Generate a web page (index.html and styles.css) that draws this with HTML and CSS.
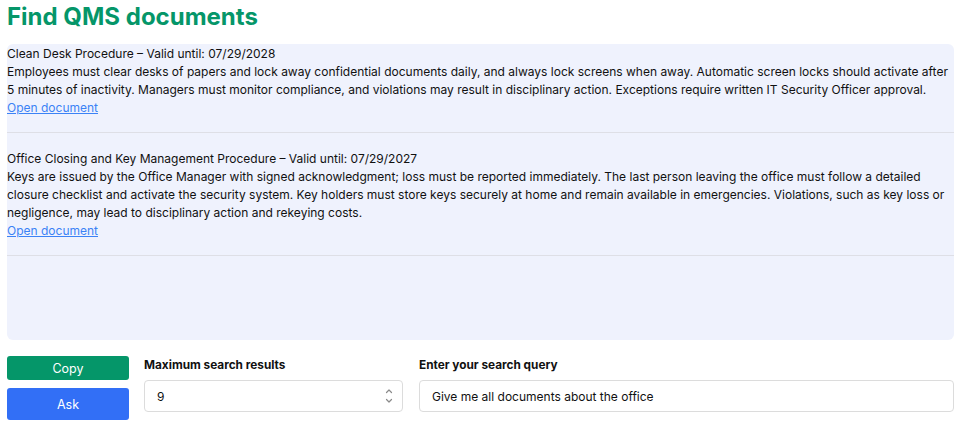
FILE: index.html
```html
<!DOCTYPE html>
<html>
<head>
<meta charset="utf-8">
<link rel="stylesheet" href="styles.css">
</head>
<body>
<div class="page">
  <h1 class="title">Find QMS documents</h1>
  <div class="results">
    <div class="item">
      <div class="item-head">Clean Desk Procedure – Valid until: 07/29/2028</div>
      <div class="item-body">Employees must clear desks of papers and lock away confidential documents daily, and always lock screens when away. Automatic screen locks should activate after 5 minutes of inactivity. Managers must monitor compliance, and violations may result in disciplinary action. Exceptions require written IT Security Officer approval.</div>
      <a class="item-link" href="#">Open document</a>
    </div>
    <div class="item">
      <div class="item-head">Office Closing and Key Management Procedure – Valid until: 07/29/2027</div>
      <div class="item-body">Keys are issued by the Office Manager with signed acknowledgment; loss must be reported immediately. The last person leaving the office must follow a detailed closure checklist and activate the security system. Key holders must store keys securely at home and remain available in emergencies. Violations, such as key loss or negligence, may lead to disciplinary action and rekeying costs.</div>
      <a class="item-link" href="#">Open document</a>
    </div>
  </div>
  <div class="controls">
    <div class="buttons">
      <button class="btn btn-copy">Copy</button>
      <button class="btn btn-ask">Ask</button>
    </div>
    <div class="field field-num">
      <label class="field-label">Maximum search results</label>
      <div class="input-box">
        <input class="input" type="text" value="9">
        <svg class="spin" width="10" height="20" viewBox="0 0 10 20">
          <path d="M2.5 6.5 L5 4 L7.5 6.5" fill="none" stroke="#8a8a8a" stroke-width="1.2" stroke-linecap="round" stroke-linejoin="round"/>
          <path d="M2.5 13.5 L5 16 L7.5 13.5" fill="none" stroke="#8a8a8a" stroke-width="1.2" stroke-linecap="round" stroke-linejoin="round"/>
        </svg>
      </div>
    </div>
    <div class="field field-query">
      <label class="field-label">Enter your search query</label>
      <div class="input-box">
        <input class="input" type="text" value="Give me all documents about the office">
      </div>
    </div>
  </div>
</div>
</body>
</html>
```
FILE: styles.css
```css
* { box-sizing: border-box; }
html, body { margin: 0; padding: 0; background: #fff; }
body {
  font-family: Inter, "Noto Sans", sans-serif;
  font-size: 12px;
  color: #111;
}
.page {
  width: 947px;
  margin-left: 7px;
  padding-top: 2px;
}
.title {
  margin: 0;
  font-size: 24px;
  line-height: 30px;
  font-weight: 700;
  color: #059669;
}
.results {
  margin-top: 12px;
  height: 296px;
  background: #eff2fd;
  border-radius: 6px;
  overflow: hidden;
}
.item {
  padding-top: 1px;
  padding-bottom: 15px;
  margin-bottom: 16px;
  border-bottom: 1px solid #dedfe6;
  line-height: 18px;
}
.item-head, .item-body { color: #111; }
.item-link {
  display: inline-block;
  color: #3b82f6;
  text-decoration: underline;
}
.controls {
  margin-top: 16px;
  display: flex;
  gap: 15px;
}
.buttons {
  width: 122px;
  display: flex;
  flex-direction: column;
  gap: 8px;
}
.btn {
  border: none;
  border-radius: 3px;
  color: #fff;
  font-family: Inter, "Noto Sans", sans-serif;
  font-size: 12.5px;
  padding: 0;
}
.btn-copy { background: #059669; height: 24px; }
.btn-ask { background: #326ff6; height: 32px; }
.field {
  display: flex;
  flex-direction: column;
  gap: 6px;
}
.field-num { width: 259px; }
.field-query { flex: 1; margin-left: 1px; }
.field-label {
  font-weight: 700;
  font-size: 11.8px;
  line-height: 18px;
  color: #111;
}
.input-box {
  height: 32px;
  border: 1px solid #dcdcdc;
  border-radius: 4px;
  background: #fff;
  display: flex;
  align-items: center;
  padding: 0 6px 0 12px;
}
.input {
  flex: 1;
  border: none;
  outline: none;
  padding: 0;
  font-family: Inter, "Noto Sans", sans-serif;
  font-size: 12px;
  color: #111;
  background: transparent;
  min-width: 0;
}
.spin { flex: none; margin-right: 2px; }
```
